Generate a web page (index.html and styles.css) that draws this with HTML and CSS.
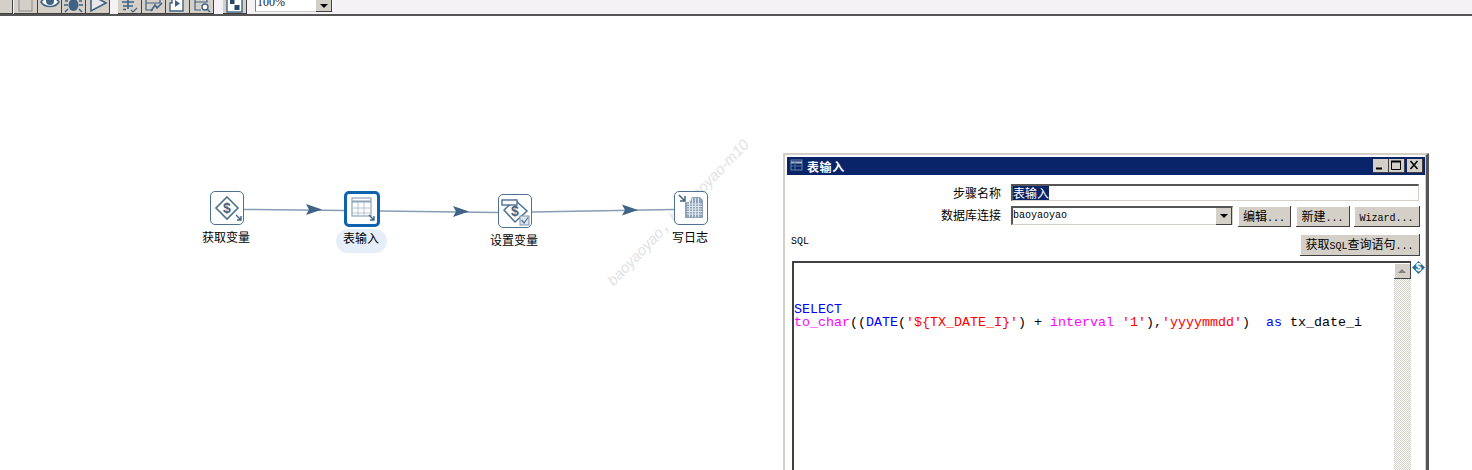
FILE: index.html
```html
<!DOCTYPE html>
<html lang="zh-CN">
<head>
    <meta charset="UTF-8">
    <title>表输入</title>
    <link rel="stylesheet" href="styles.css">
</head>
<body>
    <div class="toolbar">
        <div class="tool narrow"></div>
        <div class="tool"><svg width="23" height="14" viewBox="0 0 23 14"><rect x="5" y="-3" width="13" height="14" fill="#d4d0c8" stroke="#8a8a8a"/></svg></div>
        <div class="tool"><svg width="24" height="14" viewBox="0 0 24 14"><path d="M3 2C7-4 17-4 21 2C17 8 7 8 3 2Z" fill="#fff" stroke="#3f6384" stroke-width="1.6"/><circle cx="12" cy="1" r="4" fill="#3f6384"/></svg></div>
        <div class="tool"><svg width="23" height="14" viewBox="0 0 23 14"><ellipse cx="11.5" cy="5" rx="5" ry="6" fill="#3f6384"/><path d="M6 1H3M6 5H2M6 9L3 12M17 1H20M17 5H21M17 9L20 12" stroke="#3f6384" stroke-width="1.5" fill="none"/></svg></div>
        <div class="tool"><svg width="24" height="14" viewBox="0 0 24 14"><path d="M5-3V11L20 3L9-3" fill="#e8e8e8" stroke="#3f6384" stroke-width="1.6"/></svg></div>
        <div class="tool-gap"></div>
        <div class="tool"><svg width="23" height="14" viewBox="0 0 23 14"><path d="M4 2H16M10-2V9M5 6H15M5 9.5H8" stroke="#3f6384" stroke-width="1.6" fill="none"/><path d="M13 10L15 12L19 8" stroke="#3f6384" stroke-width="1.2" fill="none"/></svg></div>
        <div class="tool"><svg width="23" height="14" viewBox="0 0 23 14"><path d="M4-2V10H11M4 3H18V-2" stroke="#3f6384" stroke-width="1.2" fill="none"/><path d="M9 11L13 5L15 8L20 3" stroke="#3f6384" stroke-width="1.6" fill="none"/></svg></div>
        <div class="tool"><svg width="22" height="14" viewBox="0 0 22 14"><path d="M6-2V3H4V11H17V-2" fill="#fff" stroke="#3f6384" stroke-width="1.4"/><path d="M9 0L14 3.5L9 7Z" fill="#3f6384"/></svg></div>
        <div class="tool"><svg width="23" height="14" viewBox="0 0 23 14"><path d="M5-2V10H11M5 2H17V-2" stroke="#3f6384" stroke-width="1.2" fill="none"/><circle cx="15" cy="7" r="3" fill="#fff" stroke="#3f6384" stroke-width="1.4"/><path d="M17 9L20 12" stroke="#3f6384" stroke-width="1.6"/></svg></div>
        <div class="tool-gap wide"></div>
        <div class="tool"><svg width="23" height="14" viewBox="0 0 23 14"><rect x="4" y="-3" width="15" height="15" fill="#fff" stroke="#3f6384" stroke-width="1.4"/><rect x="7" y="0" width="4.500" height="4" fill="#27476a"/><rect x="11.500" y="5" width="5" height="5" fill="#27476a"/></svg></div>
        <div class="zoom-box">
            <span class="zoom-value">100%</span>
            <span class="combo-arrow"></span>
        </div>
    </div>

    <div class="canvas">
        <div class="watermark">baoyaoyao，baoyaoyao-m10</div>

        <svg class="hops" width="800" height="260" viewBox="0 0 800 260">
            <path class="hop" d="M244 193.500L345 194.500"/>
            <path class="arrow" d="M306 188L322 193.500L306 199L309 193.500Z"/>
            <path class="hop" d="M380 195L498 196.500"/>
            <path class="arrow" d="M453 190L469 195.500L453 201L456 195.500Z"/>
            <path class="hop" d="M532 196L674 193.500"/>
            <path class="arrow" d="M622 188.500L638 194L622 199.500L625 194Z"/>
        </svg>

        <div class="node node-get">
            <div class="node-icon">
                <svg width="32" height="32" viewBox="0 0 32 32">
                    <path d="M16 5L27 16L16 27L5 16Z" fill="#fff" stroke="#4f7191" stroke-width="1.600"/>
                    <text x="16" y="21" class="dollar">$</text>
                    <path d="M25 23L30 28M30 24V28H26" stroke="#3f6384" stroke-width="1.400" fill="none"/>
                </svg>
            </div>
            <div class="node-label">获取变量</div>
        </div>

        <div class="node node-input">
            <div class="node-icon selected">
                <svg width="30" height="30" viewBox="0 0 30 30">
                    <rect x="5" y="4" width="19" height="18" fill="#fff" stroke="#8ea3b8" stroke-width="1.200"/>
                    <path d="M5 7.500H24" stroke="#8ea3b8" stroke-width="2"/>
                    <path d="M5 14H24M5 19H24M11 8V22M17 8V22" stroke="#b4c2d0" stroke-width="1"/>
                    <path d="M22 21L27 26M27 22V26H23" stroke="#3f6384" stroke-width="1.400" fill="none"/>
                </svg>
            </div>
            <div class="node-label">表输入</div>
        </div>

        <div class="node node-set">
            <div class="node-icon">
                <svg width="32" height="32" viewBox="0 0 32 32">
                    <path d="M16 5L28 16L16 27L5 15Z" fill="#fff" stroke="#4f7191" stroke-width="1.500"/>
                    <rect x="3" y="5" width="15" height="5" fill="#fff" stroke="#4f7191" stroke-width="1.400"/>
                    <text x="16" y="21" class="dollar">$</text>
                    <rect x="21" y="21" width="9" height="9" fill="#dfe6ed" stroke="#7d95ae"/>
                    <path d="M22.500 25L25 28L29 22.500" stroke="#4f7191" stroke-width="1.200" fill="none"/>
                </svg>
            </div>
            <div class="node-label">设置变量</div>
        </div>

        <div class="node node-log">
            <div class="node-icon">
                <svg width="32" height="32" viewBox="0 0 32 32">
                    <path d="M10 10H15L17 5H25L28 8V26H10Z" fill="#8ea3b8"/>
                    <path d="M12 12H27M12 14.500H27M12 17H27M12 19.500H27M12 22H27M14.500 8V25M17.500 6V25M20.500 6V25M23.500 6V25" stroke="#dfe6ed" stroke-width="1"/>
                    <path d="M4 3L10 9M10 4V9H5" stroke="#3f6384" stroke-width="1.500" fill="none"/>
                </svg>
            </div>
            <div class="node-label">写日志</div>
        </div>

        <div class="dialog">
            <div class="title-bar">
                <svg width="16" height="16" viewBox="0 0 16 16"><rect x="2" y="2" width="11" height="10" fill="none" stroke="#6d88a3"/><path d="M2 4.500H13" stroke="#a8b8c8" stroke-width="2"/><path d="M2 8H13M6 4V12" stroke="#4f7191"/></svg>
                <span class="title-text">表输入</span>
                <div class="win-buttons">
                    <span class="win-btn"><svg width="14" height="12" viewBox="0 0 14 12"><path d="M3 9.500H9" stroke="#000" stroke-width="2"/></svg></span>
                    <span class="win-btn"><svg width="14" height="12" viewBox="0 0 14 12"><path d="M2.500 2.500H11.500V10.500H2.500Z" fill="none" stroke="#000"/><path d="M2 2.500H12" stroke="#000" stroke-width="2"/></svg></span>
                    <span class="win-btn close"><svg width="14" height="12" viewBox="0 0 14 12"><path d="M3.500 2L10.500 10M10.500 2L3.500 10" stroke="#000" stroke-width="1.600"/></svg></span>
                </div>
            </div>

            <div class="form">
                <div class="form-row name-row">
                    <label class="field-label">步骤名称</label>
                    <div class="field name-field"><span class="selected-text">表输入</span></div>
                </div>
                <div class="form-row conn-row">
                    <label class="field-label">数据库连接</label>
                    <div class="field conn-field">
                        <span class="conn-value">baoyaoyao</span>
                        <span class="combo-arrow"></span>
                    </div>
                    <button class="btn edit-btn">编辑<i>...</i></button>
                    <button class="btn new-btn">新建<i>...</i></button>
                    <button class="btn wizard-btn"><i>Wizard...</i></button>
                </div>
                <div class="sql-row">
                    <span class="sql-label">SQL</span>
                    <button class="btn query-btn">获取<i>SQL</i>查询语句<i>...</i></button>
                </div>
            </div>

            <div class="editor-row">
                <div class="editor">
                    <pre class="code"><span class="kw">SELECT</span>
<span class="fn">to_char</span>((<span class="kw">DATE</span>(<span class="str">'${TX_DATE_I}'</span>) + <span class="fn">interval</span> <span class="str">'1'</span>),<span class="str">'yyyymmdd'</span>)  <span class="kw">as</span> tx_date_i</pre>
                    <div class="scrollbar">
                        <div class="scroll-up"></div>
                    </div>
                </div>
                <svg class="var-icon" width="13" height="13" viewBox="0 0 13 13">
                    <path d="M6.500 0L13 6.500L6.500 13L0 6.500Z" fill="#2f6f9f"/>
                    <text x="6.500" y="10" class="var-dollar">$</text>
                </svg>
            </div>
        </div>
    </div>
</body>
</html>
```

FILE: styles.css
```css
* {
    box-sizing: border-box;
}

html, body {
    margin: 0;
    height: 470px;
    overflow: hidden;
    background-color: white;
}

body {
    font-family: "Noto Sans CJK SC", sans-serif;
    font-size: 12px;
    color: #000;
}

.toolbar {
    height: 16px;
    display: flex;
    align-items: flex-start;
    background-color: #f5f2f5;
    border-bottom: 2px solid #555;
}

.tool {
    width: 24px;
    height: 14px;
    flex-shrink: 0;
    background-color: #d4d0c8;
    border-right: 1px solid #404040;
    border-bottom: 1px solid #404040;
    overflow: hidden;
}

.tool svg {
    display: block;
}

.tool.narrow {
    width: 13px;
    margin-right: 1px;
}

.tool-gap {
    width: 8px;
}

.tool-gap.wide {
    width: 9px;
}

.zoom-box {
    margin-left: 8px;
    width: 78px;
    height: 12px;
    background-color: white;
    border-bottom: 1px solid #ccc;
    border-left: 1px solid #808080;
    display: flex;
    justify-content: space-between;
    position: relative;
}

.zoom-value {
    font-family: "Liberation Serif", serif;
    font-size: 12px;
    line-height: 12px;
    margin-top: -4px;
    margin-left: 1px;
    color: #222;
}

.zoom-box .combo-arrow {
    height: 12px;
    margin-right: 1px;
}

.combo-arrow {
    width: 16px;
    height: 17px;
    background-color: #d4d0c8;
    border-right: 1px solid #404040;
    border-bottom: 1px solid #404040;
    display: flex;
    align-items: center;
    justify-content: center;
    flex-shrink: 0;
}

.combo-arrow::after {
    content: "";
    border-left: 4px solid transparent;
    border-right: 4px solid transparent;
    border-top: 4px solid #000;
}

.canvas {
    position: relative;
    height: 454px;
    overflow: hidden;
}

.watermark {
    position: absolute;
    left: 572px;
    top: 185px;
    width: 210px;
    text-align: center;
    white-space: nowrap;
    font-family: "Liberation Sans", sans-serif;
    font-style: italic;
    font-size: 15px;
    color: #e2e2e2;
    transform: rotate(-46deg);
}

.hops {
    position: absolute;
    left: 0;
    top: 0;
}

.hop {
    fill: none;
    stroke: #869db4;
    stroke-width: 1.5;
}

.arrow {
    fill: #3f6384;
}

.node {
    position: absolute;
    width: 80px;
    display: flex;
    flex-direction: column;
    align-items: center;
}

.node-get { left: 187px; top: 175px; }
.node-input { left: 322px; top: 175px; }
.node-set { left: 475px; top: 178px; }
.node-log { left: 651px; top: 175px; }

.node-icon {
    width: 34px;
    height: 34px;
    background-color: white;
    border: 1px solid #4f7191;
    border-radius: 5px;
    display: flex;
    align-items: center;
    justify-content: center;
    overflow: hidden;
}

.node-icon.selected {
    width: 36px;
    height: 36px;
    border: 3px solid #0f62ae;
    border-radius: 5px;
}

.node-label {
    margin-top: 2px;
    margin-right: 2px;
    height: 19px;
    line-height: 19px;
    white-space: nowrap;
}

.node-input .node-label {
    margin-top: 2px;
    width: 51px;
    height: 24px;
    line-height: 18px;
    text-align: center;
    background-color: #e6eef9;
    border-radius: 12px;
}

.dollar {
    font-family: "Liberation Sans", sans-serif;
    font-size: 14px;
    font-weight: bold;
    text-anchor: middle;
    fill: #3f6384;
}

.dialog {
    position: absolute;
    left: 783px;
    top: 137px;
    width: 646px;
    height: 330px;
    padding: 4px 1px 0 4px;
    background-color: white;
    border-top: 2px solid #d4d0c8;
    border-left: 2px solid #d4d0c8;
    border-right: 3px solid #555;
    box-shadow: inset -1px 0 0 #d4d0c8;
}

.title-bar {
    height: 18px;
    margin-left: -2px;
    margin-top: -2px;
    padding: 0 2px;
    display: flex;
    align-items: center;
    gap: 2px;
    background-color: #0a246a;
}

.title-text {
    color: white;
    font-weight: bold;
    font-size: 12px;
    letter-spacing: 0.6px;
}

.win-buttons {
    margin-left: auto;
    display: flex;
}

.win-btn {
    width: 16px;
    height: 14px;
    background-color: #d4d0c8;
    border-right: 1px solid #404040;
    border-bottom: 1px solid #404040;
    display: flex;
}

.win-btn.close {
    margin-left: 2px;
}

.form {
    margin-left: -2px;
}

.form-row {
    display: flex;
    align-items: flex-start;
}

.field-label {
    width: 214px;
    text-align: right;
    flex-shrink: 0;
    line-height: 18px;
}

.name-row {
    height: 22px;
    padding-top: 9px;
    box-sizing: content-box;
}

.conn-row {
    height: 28px;
}

.field {
    margin-left: 10px;
    background-color: white;
    border-top: 2px solid #555;
    border-left: 2px solid #555;
    border-right: 1px solid #d4d0c8;
    border-bottom: 1px solid #d4d0c8;
}

.name-field {
    width: 408px;
    height: 17px;
    display: flex;
}

.selected-text {
    background-color: #0a246a;
    color: white;
    line-height: 14px;
}

.conn-field {
    width: 222px;
    height: 19px;
    display: flex;
    justify-content: space-between;
}

.conn-value {
    font-family: "Liberation Mono", monospace;
    font-size: 10px;
    line-height: 16px;
}

.btn {
    height: 21px;
    padding: 0;
    margin: 0;
    border: none;
    background-color: #d4d0c8;
    border-right: 1px solid #404040;
    border-bottom: 1px solid #404040;
    box-shadow: inset 1px 1px 0 white;
    font-family: inherit;
    font-size: 12px;
    line-height: 20px;
    color: #000;
    white-space: nowrap;
}

.btn i {
    font-family: "Liberation Mono", monospace;
    font-style: normal;
    font-size: 10px;
}

.edit-btn {
    width: 53px;
    margin-left: 5px;
}

.new-btn {
    width: 54px;
    margin-left: 5px;
}

.wizard-btn {
    width: 66px;
    margin-left: 4px;
}

.sql-row {
    display: flex;
    justify-content: space-between;
    align-items: flex-start;
    height: 27px;
}

.sql-label {
    margin-left: 4px;
    margin-top: 1px;
    font-family: "Liberation Mono", monospace;
    font-size: 10px;
    line-height: 14px;
}

.query-btn {
    width: 120px;
    height: 22px;
    margin-right: 5px;
}

.editor-row {
    display: flex;
    align-items: flex-start;
    margin-left: 3px;
}

.editor {
    width: 621px;
    height: 240px;
    display: flex;
    justify-content: space-between;
    border-top: 2px solid #404040;
    border-left: 2px solid #404040;
}

.code {
    margin: 40px 0 0;
    font-family: "Liberation Mono", monospace;
    font-size: 13.33px;
    line-height: 13px;
    color: #000;
}

.kw { color: #0000ff; }
.fn { color: #ff00ff; }
.str { color: #ff0000; }

.scrollbar {
    width: 17px;
    background-color: #e9e7e2;
    background-image: repeating-conic-gradient(#d4d0c8 0 25%, #fff 0 50%);
    background-size: 2px 2px;
}

.scroll-up {
    height: 16px;
    background-color: #d4d0c8;
    border-right: 1px solid #404040;
    border-bottom: 1px solid #404040;
    box-shadow: inset 1px 1px 0 white;
    display: flex;
    align-items: center;
    justify-content: center;
}

.scroll-up::after {
    content: "";
    border-left: 4px solid transparent;
    border-right: 4px solid transparent;
    border-bottom: 4px solid #808080;
}

.var-icon {
    margin-left: 1px;
    flex-shrink: 0;
}

.var-dollar {
    font-family: "Liberation Sans", sans-serif;
    font-size: 10px;
    font-weight: bold;
    text-anchor: middle;
    fill: white;
}
```
